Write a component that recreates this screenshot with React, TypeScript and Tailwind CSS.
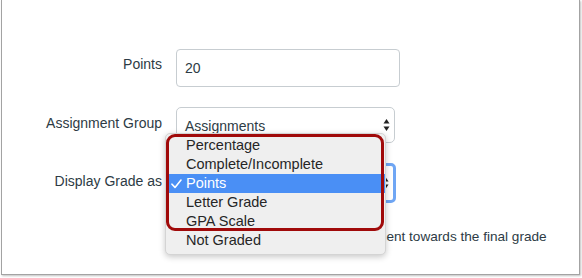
import React from 'react';

const options = ['Percentage', 'Complete/Incomplete', 'Points', 'Letter Grade', 'GPA Scale', 'Not Graded'];

const Arrows = () => (
  <svg width="7" height="13" viewBox="0 0 7 13" className="absolute right-[4px] top-1/2 -translate-y-1/2">
    <path d="M3.5 0.5 L6.5 5 L0.5 5 Z" fill="#222" />
    <path d="M3.5 12.5 L6.5 8 L0.5 8 Z" fill="#222" />
  </svg>
);

const App = () => {
  const selected = 'Points';

  return (
    <div
      className="relative w-[582px] h-[278px] bg-white pl-[1px] pr-[2px] pb-[3px]"
      style={{ fontFamily: '"Liberation Sans", Arial, sans-serif' }}
    >
      {/* Card */}
      <div className="h-full bg-white border-l border-r border-b border-[#a3a3a3] shadow-[1px_1px_2px_rgba(0,0,0,0.25)] pt-[49px] text-[14px] text-[#2d3b45]">
        <div className="grid grid-cols-[160px_1fr] gap-x-[14px]">
          {/* Points */}
          <div className="text-right pt-[5px] leading-5">Points</div>
          <div className="w-[224px] h-[38px] border border-[#c7cdd1] rounded-[4px] flex items-center pl-[8px] pt-[1px] text-[#2d3b45]">
            20
          </div>

          {/* Assignment Group */}
          <div className="text-right pt-[6px] leading-5 mt-[20px]">Assignment Group</div>
          <div className="relative mt-[20px] w-[219px] h-[36px] border border-[#c7cdd1] rounded-[5px] flex items-center pl-[8px] pt-[3px] text-[#2d3b45]">
            Assignments
            <Arrows />
          </div>

          {/* Display Grade as */}
          <div className="text-right pt-[8px] leading-5 mt-[20px]">Display Grade as</div>
          <div className="relative mt-[20px] w-[220px] h-[40px] border-[3px] border-[#6fa6f4] rounded-[5px] flex items-center pl-[8px] text-[#2d3b45]">
            Points
            <Arrows />
          </div>

          {/* Do not count */}
          <div />
          <div className="mt-[24px] flex items-center leading-5">
            <span className="ml-[35px] w-[14px] h-[14px] border border-[#888] rounded-[3px] bg-white" />
            <span className="ml-[5px] text-[13.6px]">Do not count this assignment towards the final grade</span>
          </div>
        </div>
      </div>

      {/* Native select menu */}
      <div className="absolute left-[165px] top-[133px] w-[221px] h-[122px] bg-[#efefef] border border-[#d4d4d4] rounded-[5px] shadow-[0_2px_6px_rgba(0,0,0,0.22)] pt-[2px] text-[14.5px] text-[#262626]">
        {options.map(opt => (
          <div
            key={opt}
            className={`relative h-[19px] leading-[19px] pl-[20px] ${opt === selected ? 'bg-[#4a8ff5] text-white' : ''}`}
          >
            {opt === selected && (
              <svg width="11" height="10" viewBox="0 0 11 10" className="absolute left-[5px] top-[5px]">
                <path d="M1 5.2 L4 8.4 L10 1" stroke="white" strokeWidth="1.6" fill="none" strokeLinecap="round" strokeLinejoin="round" />
              </svg>
            )}
            {opt}
          </div>
        ))}
      </div>

      {/* Highlight outline */}
      <div className="absolute left-[166px] top-[134px] w-[218px] h-[97px] border-[3px] border-[#a00a0a] rounded-[9px]" />
    </div>
  );
};

export default App;
